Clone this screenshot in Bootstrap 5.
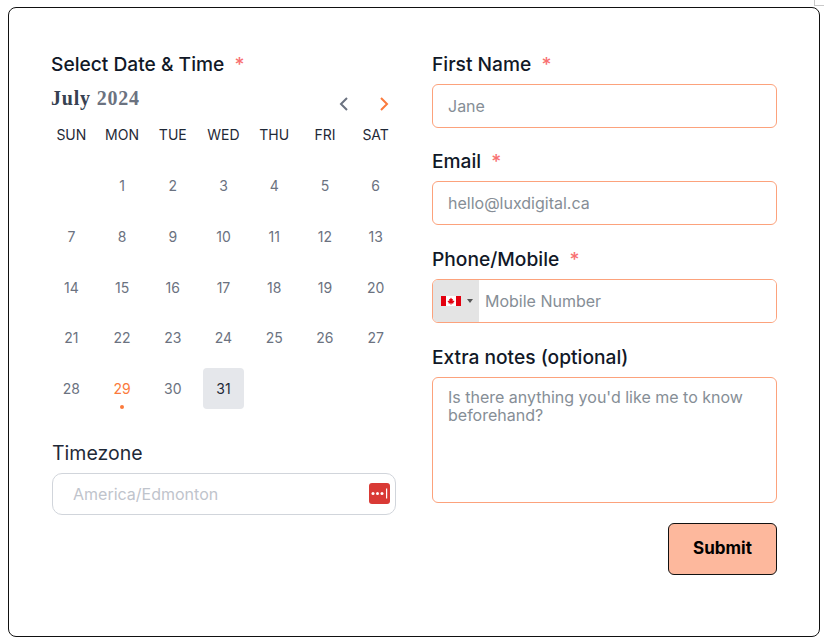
<!DOCTYPE html>
<html lang="en">
<head>
<meta charset="utf-8">
<title>Booking form</title>
<link href="https://cdn.jsdelivr.net/npm/bootstrap@5.3.0/dist/css/bootstrap.min.css" rel="stylesheet">
<style>
html,body{height:638px;overflow:hidden}
body{font-family:Inter,"Liberation Sans",sans-serif;background:#fff;padding:7px 4px 0 8px;position:relative}
.corner-mark{position:absolute;top:0;right:0;width:10px;height:6px;border-left:1px solid #c9c9c9;border-bottom:1px solid #c9c9c9}
.shell{height:630px;border:1px solid #111;border-radius:8px;padding:45px 42px 0}
.shell-row{--bs-gutter-x:36px}
.fld-label{display:block;height:22px;line-height:22px;margin:0 0 9px;font-size:19.2px;font-weight:450;color:#111827}
.req{color:#f87171;margin-left:5px}
.fld-group{margin-bottom:23px}
.fld-first{margin-bottom:22px}
.fld-input.form-control{height:44px;border:1px solid #fca27c;border-radius:6px;padding:0 15px;font-size:16px;color:#374151}
.fld-input.form-control::placeholder,.notes.form-control::placeholder,.tel-input::placeholder{color:#868e96;opacity:1}
.notes.form-control{height:126px;border:1px solid #fca27c;border-radius:6px;padding:10px 15px;font-size:16px;line-height:18px;resize:none}
.tel-wrap{height:44px;border:1px solid #fca27c;border-radius:6px;overflow:hidden}
.tel-flag{width:46px;background:#e4e4e4;gap:6px;padding-left:8px}
.tel-caret{width:0;height:0;border-left:3px solid transparent;border-right:3px solid transparent;border-top:4px solid #555}
.tel-input{border:0;outline:0;flex:1;min-width:0;padding:0 6px;font-size:16px;font-family:inherit}
.month{height:24px;margin-bottom:15px}
.month-name{font-family:"Liberation Serif",serif;font-weight:700;font-size:20px;line-height:22px;letter-spacing:.8px;color:#374151;padding-top:3px}
.month-year{color:#6b7280}
.month-nav{gap:24px;padding:12px 0 0;margin-right:4px}
.cal{display:grid;grid-template-columns:repeat(7,1fr);margin:0 -5px;grid-auto-rows:50.7px;text-align:center}
.cal-head{font-size:14px;font-weight:400;color:#1f2937;height:26px;line-height:24px}
.cal-head-row{display:grid;grid-template-columns:repeat(7,1fr);margin:0 -5px 11.5px;text-align:center}
.day{display:flex;align-items:center;justify-content:center;position:relative;font-size:14px;color:#6b7280}
.day-today{color:#fb7a3c}
.day-today::after{content:"";position:absolute;left:50%;bottom:5px;width:4px;height:4px;margin-left:-2px;border-radius:50%;background:#fb7a3c}
.day-sel{color:#1f2937;font-weight:400}
.day-sel::before{content:"";position:absolute;inset:5px 5px;background:#e5e7eb;border-radius:4px;z-index:0}
.day-sel span{position:relative}
.tz{margin-top:29px}
.tz-label{font-size:19.5px;line-height:21px;height:22px;margin:0 0 8px 1px;color:#1f2937;font-weight:400;display:block}
.tz-box{position:relative;margin-left:1px}
.tz-input.form-control{height:42px;border:1px solid #d1d5db;border-radius:10px;padding:0 20px;font-size:16px}
.tz-input.form-control::placeholder{color:#bfc4cc;opacity:1}
.lp-icon{position:absolute;right:6px;top:10px;width:21px;height:21px}
.go{width:109px;height:52px;background:#fdb89d;border:1px solid #111;border-radius:6px;font-size:17px;font-weight:700;color:#000;padding:0}
.go:hover{background:#fdb89d;color:#000;border-color:#111}
</style>
</head>
<body>
<div class="corner-mark"></div>
<div class="shell bg-white">
  <div class="row shell-row">
    <div class="col-6">
      <label class="fld-label">Select Date &amp; Time <span class="req">*</span></label>
      <div class="month d-flex justify-content-between align-items-start">
        <div class="month-name">July <span class="month-year">2024</span></div>
        <div class="month-nav d-flex align-items-center">
          <svg width="16" height="16" viewBox="0 0 16 16" fill="none" stroke="#6b7280" stroke-width="2"><path d="M11 2 5 8l6 6"/></svg>
          <svg width="16" height="16" viewBox="0 0 16 16" fill="none" stroke="#fb7a3c" stroke-width="2"><path d="m5 2 6 6-6 6"/></svg>
        </div>
      </div>
      <div class="cal-head-row">
        <div class="cal-head">SUN</div><div class="cal-head">MON</div><div class="cal-head">TUE</div><div class="cal-head">WED</div><div class="cal-head">THU</div><div class="cal-head">FRI</div><div class="cal-head">SAT</div>
      </div>
      <div class="cal">
        <div class="day"></div><div class="day">1</div><div class="day">2</div><div class="day">3</div><div class="day">4</div><div class="day">5</div><div class="day">6</div>
        <div class="day">7</div><div class="day">8</div><div class="day">9</div><div class="day">10</div><div class="day">11</div><div class="day">12</div><div class="day">13</div>
        <div class="day">14</div><div class="day">15</div><div class="day">16</div><div class="day">17</div><div class="day">18</div><div class="day">19</div><div class="day">20</div>
        <div class="day">21</div><div class="day">22</div><div class="day">23</div><div class="day">24</div><div class="day">25</div><div class="day">26</div><div class="day">27</div>
        <div class="day">28</div><div class="day day-today">29</div><div class="day">30</div><div class="day day-sel"><span>31</span></div>
      </div>
      <div class="tz">
        <label class="tz-label">Timezone</label>
        <div class="tz-box">
          <input class="form-control tz-input" placeholder="America/Edmonton">
          <svg class="lp-icon" viewBox="0 0 21 21"><rect width="21" height="21" rx="3" fill="#d93a35"/><circle cx="4" cy="10.5" r="1.5" fill="#fff"/><circle cx="8.5" cy="10.5" r="1.5" fill="#fff"/><circle cx="13" cy="10.5" r="1.5" fill="#fff"/><rect x="17" y="5.5" width="1.2" height="10" fill="#fff"/></svg>
        </div>
      </div>
    </div>
    <div class="col-6">
      <div class="fld-group fld-first">
        <label class="fld-label">First Name <span class="req">*</span></label>
        <input class="form-control fld-input" placeholder="Jane">
      </div>
      <div class="fld-group">
        <label class="fld-label">Email <span class="req">*</span></label>
        <input class="form-control fld-input" placeholder="hello@luxdigital.ca">
      </div>
      <div class="fld-group">
        <label class="fld-label">Phone/Mobile <span class="req">*</span></label>
        <div class="tel-wrap d-flex">
          <div class="tel-flag d-flex align-items-center">
            <svg width="20" height="10" viewBox="0 0 20 10"><rect width="20" height="10" fill="#fff"/><rect width="5" height="10" fill="#e3000f"/><rect x="15" width="5" height="10" fill="#e3000f"/><path d="M10 1.5 11 3.3l1-.4-.4 2.3 1.4-.7.4 1-1.2 1.2.3.8H10.3V9h-.6V7.5H7.500l.3-.8L6.600 5.500l.4-1 1.400.7L8 2.900l1 .4z" fill="#e3000f"/></svg>
            <span class="tel-caret"></span>
          </div>
          <input class="tel-input" placeholder="Mobile Number">
        </div>
      </div>
      <div class="fld-group mb-0">
        <label class="fld-label">Extra notes (optional)</label>
        <textarea class="form-control notes" placeholder="Is there anything you'd like me to know beforehand?"></textarea>
      </div>
      <div class="d-flex justify-content-end mt-3 pt-1">
        <button type="button" class="btn go">Submit</button>
      </div>
    </div>
  </div>
</div>
<script src="https://cdn.jsdelivr.net/npm/bootstrap@5.3.0/dist/js/bootstrap.bundle.min.js"></script>
</body>
</html>
